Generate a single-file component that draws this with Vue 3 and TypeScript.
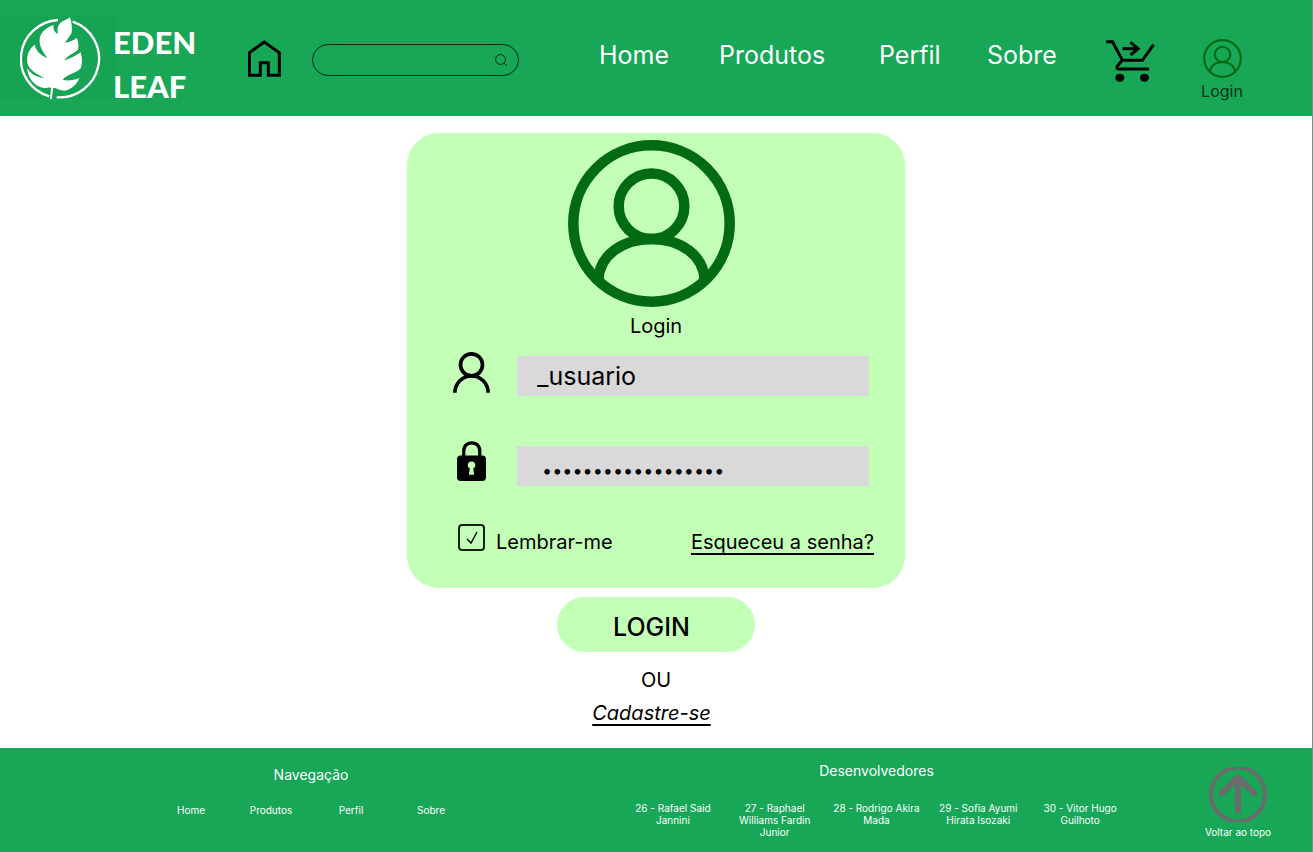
<script setup lang="ts">
import { ref } from 'vue'

interface NavLink {
  label: string
  href: string
}

const links: NavLink[] = [
  { label: 'Home', href: '#home' },
  { label: 'Produtos', href: '#produtos' },
  { label: 'Perfil', href: '#perfil' },
  { label: 'Sobre', href: '#sobre' },
]

const developers: string[] = [
  '26 - Rafael Said Jannini',
  '27 - Raphael Williams Fardin Junior',
  '28 - Rodrigo Akira Mada',
  '29 - Sofia Ayumi Hirata Isozaki',
  '30 - Vitor Hugo Guilhoto',
]

const search = ref<string>('')
const username = ref<string>('_usuario')
const password = ref<string>('edenleaf-senha-123')
const remember = ref<boolean>(true)

function scrollToTop(): void {
  window.scrollTo({ top: 0, behavior: 'smooth' })
}
</script>

<template>
  <div class="page">
    <header class="header">
      <a class="brand" href="#home">
        <span class="brand-mark">
          <svg viewBox="60 48 246 252" width="82" height="84" aria-hidden="true">
            <g fill="none" stroke="#fff" stroke-width="7">
              <path d="M174 60 A119 117 0 0 0 148 289" />
              <path d="M218 65 A119 117 0 0 1 170 292" />
            </g>
            <path
              fill="#fff"
              d="M210 52 C215 66 217 84 215 98 C210 108 202 117 195 128 C208 126 222 120 230 113 C235 124 237 136 234 149 C221 160 204 166 192 181 C210 177 229 166 242 157 C247 172 247 190 243 203 C232 220 198 222 188 240 C205 243 224 241 238 234 C231 252 216 267 195 272 C181 272 170 264 160 263 L155 298 L150 297 L153 264 C146 260 138 268 122 262 C98 252 84 232 81 204 C94 224 112 232 132 234 C112 222 86 210 82 188 C79 162 89 146 104 134 C108 152 122 166 142 174 C130 156 117 140 119 116 C121 96 143 80 161 75 C159 88 163 97 174 102 C171 90 173 76 181 69 C189 62 202 59 210 52 Z"
            />
          </svg>
        </span>
        <span class="brand-name">EDEN<br />LEAF</span>
      </a>

      <a class="home-link" href="#home" aria-label="Página inicial">
        <svg viewBox="54 56 99 111" width="33" height="37" aria-hidden="true">
          <path
            d="M58 94 L103 62 L148 94 V162 H115 V124 H91 V162 H58 Z"
            fill="none"
            stroke="#000"
            stroke-width="9"
          />
        </svg>
      </a>

      <form class="search" role="search" @submit.prevent>
        <input v-model="search" class="search-input" type="text" aria-label="Buscar" />
        <button class="search-button" type="submit" aria-label="Buscar">
          <svg viewBox="0 0 12 12" width="12" height="12" fill="none" stroke="#0b2a16" aria-hidden="true">
            <circle cx="5.5" cy="5.5" r="4.9" />
            <path d="M9 9 L11.7 11.6" />
          </svg>
        </button>
      </form>

      <nav class="nav" aria-label="Principal">
        <a v-for="link in links" :key="link.label" :href="link.href">{{ link.label }}</a>
      </nav>

      <a class="cart" href="#carrinho" aria-label="Carrinho">
        <svg viewBox="78 61 146 126" width="49" height="42" aria-hidden="true">
          <g fill="none" stroke="#000" stroke-width="9">
            <path d="M78 66 H97 L127 122 H187 L220 75" />
            <path d="M126 122 L111 140 Q108 148 117 148 H207" />
            <path d="M127 87 H174" />
            <path d="M151 68 L174 87 L151 106" />
          </g>
          <ellipse cx="119" cy="174" rx="13.5" ry="12" />
          <ellipse cx="193" cy="174" rx="13.5" ry="12" />
        </svg>
      </a>

      <a class="account" href="#login">
        <svg viewBox="0 0 167 167" width="39" height="39" fill="none" stroke="#006b12" stroke-width="9" aria-hidden="true">
          <circle cx="83.5" cy="83.5" r="78.5" />
          <circle cx="83.5" cy="66" r="33" />
          <path d="M30 140 C31 116 54 98.7 83.5 98.7 S136 116 137 140" />
        </svg>
        <span>Login</span>
      </a>
    </header>

    <main class="main">
      <form id="login-form" class="card" @submit.prevent>
        <div class="avatar">
          <svg viewBox="0 0 167 167" width="167" height="167" fill="none" stroke="#006b12" stroke-width="10.5" aria-hidden="true">
            <circle cx="83.5" cy="83.5" r="78.2" />
            <circle cx="83.5" cy="66.3" r="32.8" />
            <path d="M30.5 140 C31 116 54 98.9 83.5 98.9 S136 116 136.5 140" />
          </svg>
        </div>
        <h1 class="title">Login</h1>

        <div class="fields">
          <label class="field-icon" for="username" aria-label="Usuário">
            <svg viewBox="69 37 111 122" width="37" height="41" fill="none" stroke="#000" stroke-width="11" aria-hidden="true">
              <circle cx="124.5" cy="75" r="33" />
              <path d="M74.5 159 C75 130 97 108.5 124.5 108.5 S174 130 174.5 159" />
            </svg>
          </label>
          <input id="username" v-model="username" class="field" type="text" autocomplete="username" />

          <label class="field-icon" for="password" aria-label="Senha">
            <svg viewBox="80 301 88 127" width="29" height="42" aria-hidden="true">
              <path d="M100.5 350 V331 C100.5 298 149 298 149 331 V350" fill="none" stroke="#000" stroke-width="10" />
              <rect x="80" y="345" width="88" height="77" rx="11" />
              <path
                d="M124 363 A11 11 0 0 1 129 384 L132 403 H116 L119 384 A11 11 0 0 1 124 363 Z"
                fill="#c4ffb8"
              />
            </svg>
          </label>
          <input id="password" v-model="password" class="field field-secret" type="password" autocomplete="current-password" />
        </div>

        <div class="options">
          <label class="remember">
            <span class="check">
              <input v-model="remember" type="checkbox" />
              <svg v-if="remember" viewBox="0 0 12 14" width="12" height="14" fill="none" stroke="#000" stroke-width="1.4" aria-hidden="true">
                <path d="M1 8 L5 12 L11 1" />
              </svg>
            </span>
            <span class="remember-text">Lembrar-me</span>
          </label>
          <a class="underlined" href="#recuperar">Esqueceu a senha?</a>
        </div>
      </form>

      <button class="submit" type="submit" form="login-form">LOGIN</button>
      <p class="or">OU</p>
      <p class="signup"><a class="underlined" href="#cadastro">Cadastre-se</a></p>
    </main>

    <footer class="footer">
      <nav class="footer-nav" aria-labelledby="footer-nav-title">
        <h2 id="footer-nav-title">Navegação</h2>
        <ul>
          <li v-for="link in links" :key="link.label">
            <a :href="link.href">{{ link.label }}</a>
          </li>
        </ul>
      </nav>

      <section class="footer-devs">
        <h2>Desenvolvedores</h2>
        <ul>
          <li v-for="developer in developers" :key="developer">{{ developer }}</li>
        </ul>
      </section>

      <button class="to-top" type="button" @click="scrollToTop">
        <svg viewBox="87 79 174 164" width="58" height="55" fill="none" stroke="#6b6b6b" aria-hidden="true">
          <circle cx="174" cy="161" r="81" stroke-width="12" />
          <path d="M174 210 V110 M125 158 L174 109 L223 158" stroke-width="18" stroke-linecap="round" stroke-linejoin="round" />
        </svg>
        <span>Voltar ao topo</span>
      </button>
    </footer>
  </div>
</template>

<style>
body {
  margin: 0;
  background: #fff;
}
</style>

<style scoped>
.page {
  --green: #18a657;
  --mint: #c4ffb8;
  --optical: 9px;
  display: flex;
  flex-direction: column;
  box-sizing: border-box;
  min-height: 100vh;
  border-right: 1px solid #8a8a8a;
  font-family: Inter, "Liberation Sans", sans-serif;
  color: #000;
}

.page *,
.page *::before {
  box-sizing: border-box;
}

a {
  color: inherit;
  text-decoration: none;
}

button,
input {
  font: inherit;
  color: inherit;
}

h1,
h2,
p,
ul {
  margin: 0;
  padding: 0;
  font-weight: 400;
}

ul {
  list-style: none;
}

svg {
  display: block;
}

.header {
  display: grid;
  grid-template-columns:
    minmax(0, 248fr) minmax(0, 64fr) minmax(0, 207fr) minmax(0, 80fr) minmax(0, 457fr)
    minmax(0, 50fr) minmax(0, 91fr) minmax(0, 50fr) minmax(0, 65fr);
  align-items: center;
  height: 116px;
  background: var(--green);
}

.brand {
  display: flex;
  align-items: center;
  color: #fff;
}

.brand-mark {
  padding: 0 15px 0 20px;
  background: #17a354;
}

.brand-name {
  margin-left: -4px;
  padding-top: 12px;
  font-family: Lato, sans-serif;
  font-size: 31px;
  font-weight: 900;
  line-height: 44px;
}

.search {
  display: flex;
  align-items: center;
  height: 32px;
  margin-top: 3px;
  padding: 0 11px;
  border: 1px solid #0b2a16;
  border-radius: 16px;
}

.search-input {
  flex: 1;
  min-width: 0;
  border: 0;
  background: none;
  font-size: 14px;
  outline: none;
}

.search-button {
  padding: 0;
  border: 0;
  background: none;
  cursor: pointer;
}

.nav {
  grid-column: 5;
  display: grid;
  grid-template-columns:
    minmax(0, 120fr) minmax(0, 160fr) minmax(0, 108fr) minmax(0, 69fr);
  padding-bottom: 7px;
  font-size: 25px;
  line-height: 32px;
  color: #fff;
}

.cart {
  grid-column: 7;
  padding-top: 6px;
}

.account {
  display: flex;
  flex-direction: column;
  align-items: center;
  padding-top: 26px;
  font-size: 16px;
  line-height: 26px;
  color: #0b3317;
}

.main {
  flex: 1;
  display: flex;
  flex-direction: column;
  align-items: center;
  padding: 17px 16px 16px;
}

.card {
  width: 100%;
  max-width: 498px;
  padding: 7px 0 33px;
  border-radius: 32px;
  background: var(--mint);
}

.avatar {
  display: flex;
  justify-content: center;
  padding-right: var(--optical);
}

.title {
  padding-top: 4px;
  font-size: 20px;
  line-height: 30px;
  text-align: center;
}

.fields {
  display: grid;
  grid-template-columns: 64px 1fr;
  row-gap: 50px;
  align-items: center;
  padding: 15px 36px 0 46px;
}

.field-icon {
  display: flex;
  justify-content: center;
  align-items: flex-end;
  width: 37px;
  height: 40px;
  padding-bottom: 3px;
}

.field {
  width: 100%;
  height: 40px;
  padding: 0 20px;
  border: 0;
  border-radius: 0;
  background: #d9d9d9;
  font-size: 25px;
  outline: none;
}

.field-secret {
  padding: 8px 25px 0;
  font-size: 18px;
}

.options {
  display: flex;
  align-items: flex-end;
  justify-content: space-between;
  padding: 38px 31px 0 51px;
  font-size: 20px;
  line-height: 26px;
}

.remember {
  display: flex;
  gap: 11px;
}

.check {
  display: grid;
  place-items: center;
  width: 27px;
  height: 27px;
}

.check > * {
  grid-area: 1 / 1;
}

.check input {
  appearance: none;
  width: 27px;
  height: 27px;
  margin: 0;
  border: 2px solid #10240d;
  border-radius: 4px;
}

.check svg {
  pointer-events: none;
}

.remember-text {
  padding-top: 5px;
}

.underlined {
  text-decoration: underline;
  text-decoration-thickness: 2px;
  text-decoration-skip-ink: none;
  text-underline-offset: 4px;
}

.submit {
  width: 198px;
  height: 55px;
  margin-top: 9px;
  padding: 4px var(--optical) 0 0;
  border: 0;
  border-radius: 28px;
  background: var(--mint);
  font-size: 25px;
  font-weight: 500;
  cursor: pointer;
}

.or,
.signup {
  font-size: 20px;
  line-height: 33px;
}

.or {
  padding-top: 12px;
}

.signup {
  padding-right: var(--optical);
  font-style: italic;
}

.footer {
  display: grid;
  grid-template-columns: 151fr 320fr 151fr 509fr 65fr 84fr 32fr;
  align-items: start;
  min-height: 104px;
  background: var(--green);
  font-size: 10px;
  line-height: 12px;
  color: #fff;
  text-align: center;
}

.footer h2 {
  font-size: 14px;
  line-height: 18px;
}

.footer ul {
  display: grid;
  grid-auto-flow: column;
  grid-auto-columns: 1fr;
}

.footer-nav {
  grid-column: 2;
  padding-top: 18px;
}

.footer-nav ul {
  padding-top: 20px;
}

.footer-devs {
  grid-column: 4;
  padding-top: 14px;
}

.footer-devs ul {
  padding-top: 22px;
}

.footer-devs li {
  padding: 0 6px;
}

.to-top {
  grid-column: 6;
  display: flex;
  flex-direction: column;
  align-items: center;
  gap: 4px;
  padding: 19px 0 0;
  border: 0;
  background: none;
  white-space: nowrap;
  cursor: pointer;
}
</style>
